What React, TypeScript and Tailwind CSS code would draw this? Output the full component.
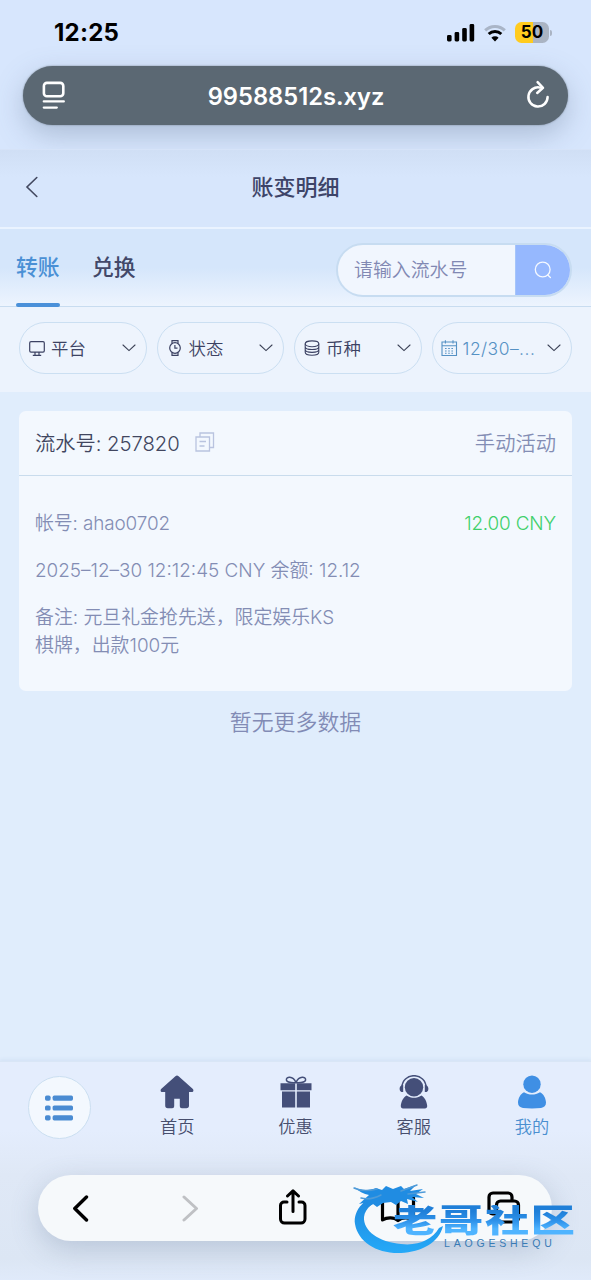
import type { ReactNode } from 'react';

function StatusBar() {
  return (
    <div className="flex h-[66px] items-center justify-between pl-[54px] pr-[39px] text-black">
      <span className="text-[24px] font-bold tracking-[0.25px]">12:25</span>
      <div className="flex items-center pb-px">
        <svg width="28" height="18" viewBox="0 0 28 18" fill="currentColor">
          <rect x="0" y="11" width="4.6" height="6.5" rx="1.4" />
          <rect x="7.6" y="8" width="4.6" height="9.5" rx="1.4" />
          <rect x="15.2" y="4" width="4.6" height="13.5" rx="1.4" />
          <rect x="22.6" y="0" width="4.6" height="17.5" rx="1.4" />
        </svg>
        <svg className="ml-[9px]" width="22" height="18" viewBox="0 0 22 18" fill="none" strokeWidth="3">
          <path d="M1.2 6.4a14 14 0 0 1 19.6 0" stroke="#a9b5c7" />
          <path d="M4.7 10a9.2 9.2 0 0 1 12.6 0" stroke="currentColor" />
          <path d="M11 17.4 7.4 13.8a5.2 5.2 0 0 1 7.2 0z" fill="currentColor" />
        </svg>
        <div className="ml-[9px] flex h-[21px] w-[34px] items-center justify-center rounded-[6.5px] bg-[linear-gradient(90deg,#ffcb1f_0_54%,#aab4c3_54%)] text-[17px] font-bold leading-none">
          50
        </div>
        <div className="ml-[1px] h-[6px] w-[2px] rounded-r bg-[#aab4c3]" />
      </div>
    </div>
  );
}

function AddressBar() {
  return (
    <div className="mx-[23px] flex h-[59px] items-center justify-between rounded-full bg-[#5b6873] pl-[19px] pr-[18px] text-white shadow-[0_10px_28px_rgba(90,110,140,0.34),0_0_2px_#7d8996]">
      <svg width="24" height="30" viewBox="0 0 24 30" fill="none" stroke="currentColor" strokeWidth="2.6" strokeLinecap="round">
        <rect x="1.9" y="1.9" width="19.4" height="13.4" rx="3" />
        <path d="M1.8 20.4h20M1.8 26.6h13" strokeWidth="2.3" />
      </svg>
      <span className="pt-[2px] text-[23.7px] font-semibold">99588512s.xyz</span>
      <svg className="-mt-[2px]" width="24" height="30" viewBox="0 0 24 30" fill="none" stroke="currentColor" strokeWidth="2.5" strokeLinecap="round" strokeLinejoin="round">
        <path d="M14 7.6A9.6 9.6 0 1 0 21.6 17" />
        <path d="M11.6 2.2 17 7.8l-5.8 5.2" />
      </svg>
    </div>
  );
}

function Chevron() {
  return (
    <svg width="14" height="8" viewBox="0 0 14 8" fill="none" stroke="#3c4257" strokeWidth="1.1" strokeLinecap="round">
      <path d="M1 1l6 5.6L13 1" />
    </svg>
  );
}

function Filter({ icon, label, active }: { icon: ReactNode; label: string; active?: boolean }) {
  return (
    <div
      className={
        'flex h-[52px] items-center rounded-full border-[1.5px] border-[#cbdff2] bg-[#eef4fd] text-[17.4px] ' +
        (active ? 'w-[141px] pl-[8px] pr-[10px] text-[#5591c4]' : 'w-[128px] pl-[8px] pr-[10px] text-[#3c4263]')
      }
    >
      {icon}
      <span className={active ? 'ml-[5px] pt-[2px] tracking-[0.5px] font-[350]' : 'ml-[5px] pt-[2px] font-[350]'}>{label}</span>
      <span className="-mt-[1px] ml-auto flex">
        <Chevron />
      </span>
    </div>
  );
}

const MonitorIcon = (
  <svg width="18" height="18" viewBox="0 0 18 18" fill="none" stroke="currentColor" strokeWidth="1.2">
    <rect x="1.7" y="2.7" width="14.6" height="10.4" rx="1.3" />
    <path d="M7 13v3M11 13v3M4.8 16.300h8.400" />
  </svg>
);
const WatchIcon = (
  <svg width="18" height="18" viewBox="0 0 18 18" fill="none" stroke="currentColor" strokeWidth="1.2">
    <circle cx="9" cy="9" r="5.3" />
    <path d="M6 4.6V1.6h6v3M6 13.4v3h6v-3M8.9 6v3.2h2.6" />
  </svg>
);
const CoinsIcon = (
  <svg width="18" height="18" viewBox="0 0 18 18" fill="none" stroke="currentColor" strokeWidth="1.1">
    <ellipse cx="9" cy="4.8" rx="6.8" ry="2.9" />
    <path d="M2.2 4.8v8.4c0 1.8 3 3 6.8 3s6.8-1.2 6.8-3V4.8M2.2 7.7c0 1.7 3 2.8 6.8 2.8s6.8-1.1 6.8-2.8M2.2 10.6c0 1.7 3 2.8 6.8 2.8s6.8-1.1 6.8-2.8" />
  </svg>
);
const CalendarIcon = (
  <svg className="-ml-px" width="18" height="18" viewBox="0 0 18 18" fill="none" stroke="currentColor" strokeWidth="1.1">
    <path d="M2 3h14.500v13.500H2zM2 6.700h14.500M5.400 1.200v3.300M13 1.200v3.300" />
    <path d="M5 9.500h8.800M5 12h8.800M5 14.300h8.800" strokeDasharray="1.600 1.600" />
  </svg>
);

function NavItem({ icon, label, active }: { icon: ReactNode; label: string; active?: boolean }) {
  return (
    <div className={'flex flex-1 flex-col items-center pt-[13px] ' + (active ? 'text-[#3f8fe4]' : 'text-[#444f79]')}>
      {icon}
      <span className={'mt-[6px] text-[17.2px] font-[350] leading-[24px] ' + (active ? 'text-[#4a8fd0]' : 'text-[#474e6d]')}>{label}</span>
    </div>
  );
}

function BottomNav() {
  return (
    <div className="flex h-[114px] border-t border-[#d9e6f6] bg-[linear-gradient(#e4edfd_60%,#dfe8f6)] shadow-[0_-2px_3px_rgba(190,210,235,0.3)]">
      <div className="flex flex-1 justify-center pt-[14px]">
        <div className="flex size-[63px] items-center justify-center rounded-full border-[1.5px] border-[#cbdff1] bg-[#f3f8fe]">
          <svg width="28" height="26" viewBox="0 0 28 26" fill="#4a8bd2">
            <rect x="0" y="0.6" width="5.6" height="5.2" rx="1.7" />
            <rect x="7.6" y="0.6" width="20.4" height="5.2" rx="1.7" />
            <rect x="0" y="10.4" width="5.6" height="5.2" rx="1.7" />
            <rect x="7.6" y="10.4" width="20.4" height="5.2" rx="1.7" />
            <rect x="0" y="20.2" width="5.6" height="5.2" rx="1.7" />
            <rect x="7.6" y="20.2" width="20.4" height="5.2" rx="1.7" />
          </svg>
        </div>
      </div>
      <NavItem
        label="首页"
        icon={
          <svg width="34" height="34" viewBox="0 0 34 34" fill="currentColor">
            <path d="M15.400 1.200a2.400 2.400 0 0 1 3.200 0l14 12.600c1.600 1.500.6 3.200-1 3.200H29v13.600a2.600 2.600 0 0 1-2.600 2.600h-4.600a2 2 0 0 1-2-2v-7.400h-5.600v7.400a2 2 0 0 1-2 2H7.800a2.600 2.600 0 0 1-2.600-2.600V17H2.400c-1.600 0-2.600-1.700-1-3.200z" />
          </svg>
        }
      />
      <NavItem
        label="优惠"
        icon={
          <svg width="34" height="34" viewBox="0 0 34 34" fill="currentColor">
            <path d="M1.500 8.200h14.700v7H1.500zM17.800 8.200h14.700v7H17.800zM3 16.600h13.200v15.800H3zM17.800 16.600H31v15.800H17.800z" />
            <path d="M17 7.600C12.800 7.800 8 7.600 7.400 5 7 1.600 13.800.4 17 7.600zM17 7.600c4.200.2 9 0 9.600-2.600C27 1.600 20.200.4 17 7.600z" fill="none" stroke="currentColor" strokeWidth="1.500" />
          </svg>
        }
      />
      <NavItem
        label="客服"
        icon={
          <svg width="34" height="34" viewBox="0 0 34 34" fill="currentColor">
            <circle cx="17" cy="12.200" r="9.200" />
            <path d="M5 12a12 11.300 0 0 1 24 0" fill="none" stroke="currentColor" strokeWidth="1.500" />
            <path d="M6.200 10v7c-2 .4-3.600-1-3.600-3.300S4.200 10 6.200 10zM27.800 10v7c2 .4 3.600-1 3.600-3.300S29.800 10 27.800 10z" />
            <path d="M9.600 20.400c4.600 3.200 10.200 3.200 14.800 0 3.200 1.600 5.600 6.400 5.800 10.600 0 1.400-.8 2.400-2.200 2.400H6c-1.400 0-2.200-1-2.200-2.400.2-4.200 2.600-9 5.800-10.600z" />
          </svg>
        }
      />
      <NavItem
        active
        label="我的"
        icon={
          <svg width="34" height="34" viewBox="0 0 34 34" fill="currentColor">
            <circle cx="17" cy="9.200" r="8.700" />
            <path d="M9 17.200c5.200 3.200 10.800 3.200 16 0 3.600 1.600 5.800 6 6 10.400 0 3.200-1.800 5-5 5.400-6 .6-12 .6-18 0-3.200-.4-5-2.200-5-5.400.2-4.400 2.400-8.800 6-10.400z" />
          </svg>
        }
      />
    </div>
  );
}

function Watermark() {
  return (
    <div className="absolute left-[353px] top-[1181px] h-[78px] w-[224px]">
      <svg className="absolute left-0 top-0" width="110" height="74" viewBox="0 0 110 74">
        <defs>
          <linearGradient id="dragon" x1="0" y1="0" x2="0" y2="1">
            <stop offset="0" stopColor="#1f86dc" />
            <stop offset="1" stopColor="#25a9f8" />
          </linearGradient>
        </defs>
        <path d="M33 12C12 15 0 29 2 43c3 18 22 30 46 29 20-1 38-10 42-27l-4 2c-7 12-21 18-38 16C26 61 10 50 11 36c1-9 10-16 24-19z" fill="url(#dragon)" />
        <path d="M1 6c7 4 14 4 22 1l6 2 4-4 7 3 8-3 3 3 12-4-6 6 13-2-7 5 8 4-12-1 6 5-11-3 1 5-7-3-5 4-5-3-8 1-6 4-4-3-8 4 3-6-9 2 10-9C11 13 5 10 1 6z" fill="#208ce2" />
        <path d="M1 7c8 4 15 3 23 1M8 17c7 2 14 0 20-3M48 10l16-6M55 13l17-2" fill="none" stroke="#4f9bd8" strokeWidth="1.500" strokeLinecap="round" />
      </svg>
      <div className="absolute left-[40px] top-[24px] origin-left scale-x-[1.38] whitespace-nowrap bg-[linear-gradient(#1f7fd8_20%,#2e92ea_50%,#4fb4ff_75%)] bg-clip-text text-[32px] font-black leading-[32px] tracking-[1.300px] text-transparent">
        老哥社区
      </div>
      <span className="absolute left-[91px] top-[57px] whitespace-nowrap font-['Liberation_Sans'] text-[10.500px] leading-[11px] tracking-[3.800px] text-[#397bb5]">LAOGESHEQU</span>
    </div>
  );
}

function BrowserToolbar() {
  return (
    <div className="h-[105px] bg-[linear-gradient(#dfe8f6,#dce6f4_80%,#e0eafa)] pl-[38px] pr-[39px]">
      <div className="flex h-[66px] items-center rounded-full bg-[#f6f9fb] pl-[34px] text-black shadow-[0_8px_28px_rgba(100,120,150,0.3)]">
        <svg width="17" height="27" viewBox="0 0 17 27" fill="none" stroke="currentColor" strokeWidth="3.400" strokeLinecap="round" strokeLinejoin="round">
          <path d="M14.500 2 2.800 13.500 14.500 25" />
        </svg>
        <svg className="ml-[93px]" width="17" height="27" viewBox="0 0 17 27" fill="none" stroke="#bfc1c4" strokeWidth="3" strokeLinecap="round" strokeLinejoin="round">
          <path d="M2 2l12.500 11.500L2 25" />
        </svg>
        <svg className="-mt-[2px] ml-[79px]" width="30" height="36" viewBox="0 0 30 36" fill="none" stroke="currentColor" strokeWidth="3" strokeLinecap="round" strokeLinejoin="round">
          <path d="M9 13H6a3.500 3.500 0 0 0-3.500 3.500V30A4 4 0 0 0 6.500 34H23a4 4 0 0 0 4-4V16.500A3.500 3.500 0 0 0 23.500 13H21M15 22.500V2M9.500 7 15 1.800 20.500 7" />
        </svg>
        <svg className="ml-[71px]" width="38" height="30" viewBox="0 0 38 30" fill="none" stroke="currentColor" strokeWidth="3.200" strokeLinejoin="round">
          <path d="M19 5C15 1.500 8 1.500 3.500 4.500V27C8 24 15 24 19 27.500 23 24 30 24 34.500 27V4.500C30 1.500 23 1.500 19 5zM19 5v22" />
        </svg>
        <svg className="ml-[70px]" width="34" height="34" viewBox="0 0 34 34" fill="none" stroke="currentColor" strokeWidth="3.200" strokeLinejoin="round">
          <path d="M8 23H5.500A3.500 3.500 0 0 1 2 19.500V6a4 4 0 0 1 4-4h15a4 4 0 0 1 4 4v3" />
          <rect x="9.500" y="10" width="22" height="21" rx="4" />
        </svg>
      </div>
    </div>
  );
}

export default function App() {
  return (
    <div className="relative flex h-[1280px] w-[591px] flex-col overflow-hidden bg-[#e0ecfc] font-['Inter','Noto_Sans_CJK_SC',sans-serif]">
      <div className="h-[149px] shrink-0 bg-[#d7e6fd]">
        <StatusBar />
        <AddressBar />
      </div>

      <header className="flex h-[80px] shrink-0 items-center border-b-2 border-t border-b-[#eaf3ff] border-t-[#d6e3f8] bg-[linear-gradient(#d0dff5,#d7e6fc_35%)] px-[25px]">
        <svg className="-mt-[3px]" width="14" height="22" viewBox="0 0 14 22" fill="none" stroke="#434960" strokeWidth="1.600" strokeLinecap="round">
          <path d="M11.800 1.500 2 11l9.800 9.500" />
        </svg>
        <h1 className="flex-1 pb-[4px] pr-[14px] text-center text-[22px] font-medium leading-none text-[#3d4468]">账变明细</h1>
      </header>

      <div className="flex h-[78px] shrink-0 border-b-[1.500px] border-[#c8dcf0] bg-[linear-gradient(#d5e6fb_50%,#edf4fe)] pl-[16px] pr-[19px]">
        <div className="flex h-[78px] w-[44px] flex-col justify-between pt-[22px] text-[21.800px] font-medium leading-[32px] text-[#4a90d5]">
          转账
          <div className="h-[4.500px] w-[44px] rounded-full bg-[#4a90d9]" />
        </div>
        <div className="ml-[32px] pt-[22px] text-[21.800px] font-medium leading-[32px] text-[#424869]">兑换</div>
        <div className="ml-auto mt-[14px] flex h-[54px] w-[236px] overflow-hidden rounded-full border-2 border-[#c7dcf1] bg-[#f1f6fe]">
          <div className="flex w-[177px] items-center pl-[16px] pt-[2px] text-[18.900px] font-[350] text-[#8188b3]">请输入流水号</div>
          <div className="flex flex-1 items-center justify-center border-l border-[#a6c5fa] bg-[#96b8fe]">
            <svg width="18" height="18" viewBox="0 0 18 18" fill="none" stroke="#f4f8ff" strokeWidth="1.300" strokeLinecap="round">
              <circle cx="8.700" cy="8.500" r="7.400" />
              <path d="M13.800 14l2.600 2.500" />
            </svg>
          </div>
        </div>
      </div>

      <div className="flex h-[85px] shrink-0 gap-[10px] bg-[#ecf3fd] px-[19px] pt-[15px]">
        <Filter icon={MonitorIcon} label="平台" />
        <Filter icon={WatchIcon} label="状态" />
        <Filter icon={CoinsIcon} label="币种" />
        <Filter icon={CalendarIcon} label="12/30–..." active />
      </div>

      <main className="flex-1 bg-[#e0edfc] px-[19px] pt-[19px]">
        <section className="h-[280px] rounded-[7px] bg-[#f3f8fe] text-[18.900px] font-[350] leading-[28px] text-[#838db4]">
          <div className="flex h-[65px] items-center border-b-[1.500px] border-[#c9dced] px-[16px] pt-[2px] text-[20.300px]">
            <span className="tracking-[-0.050px] text-[#41465f]">流水号: 257820</span>
            <svg className="-mt-[4px] ml-[15px]" width="20" height="20" viewBox="0 0 20 20" fill="none" stroke="#b9c3df" strokeWidth="1.300">
              <path d="M5 4.500V1h13.500v14.500H15M1 5h13.500v14H1zM4.500 9.500H11M4.500 14H9.500" />
            </svg>
            <span className="ml-auto">手动活动</span>
          </div>
          <div className="flex justify-between px-[16px] pt-[34px]">
            <span className="tracking-[-0.120px]">帐号: ahao0702</span>
            <span className="tracking-[-0.150px] text-[#3fd06b]">12.00 CNY</span>
          </div>
          <p className="px-[16px] pt-[19px]">2025–12–30 12:12:45 CNY 余额: 12.12</p>
          <p className="px-[16px] pt-[19px]">
            备注: 元旦礼金抢先送，限定娱乐KS
            <br />
            棋牌，出款100元
          </p>
        </section>
        <p className="pt-[15px] text-center text-[21.900px] font-[350] leading-[32px] text-[#828bb5]">暂无更多数据</p>
      </main>

      <BottomNav />
      <BrowserToolbar />
      <Watermark />
    </div>
  );
}
